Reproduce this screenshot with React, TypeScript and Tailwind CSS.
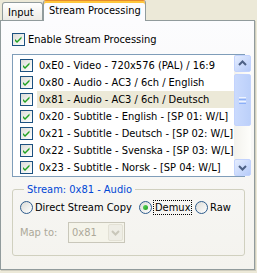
import React from "react";

function XPCheck() {
  return (
    <div className="w-[13px] h-[13px] shrink-0 border border-[#1C5180] bg-gradient-to-br from-[#DCDCD7] to-[#FFFFFF] flex items-center justify-center">
      <svg width="11" height="11" viewBox="0 0 11 11">
        <path d="M2 5 L4 7 L8.5 2.5 L8.5 4.5 L4 9 L2 7 Z" fill="#21A121" />
      </svg>
    </div>
  );
}

function XPRadio({ checked }: { checked?: boolean }) {
  return (
    <div className="w-[13px] h-[13px] shrink-0 rounded-full border border-[#2E5C8C] bg-gradient-to-br from-[#DCDCD7] to-[#FFFFFF] flex items-center justify-center">
      {checked && (
        <div className="w-[5px] h-[5px] rounded-full bg-gradient-to-br from-[#5BD85A] to-[#1E9C1E]" />
      )}
    </div>
  );
}

function ScrollBtn({ up }: { up?: boolean }) {
  return (
    <div className="w-[17px] h-[17px] rounded-[2px] border border-[#C3D3FD] bg-gradient-to-br from-[#E5EDFE] to-[#B6CBF9] flex items-center justify-center">
      <svg width="9" height="7" viewBox="0 0 9 7">
        {up ? (
          <path d="M1 5 L4.5 1.5 L8 5" stroke="#4D6185" strokeWidth="2" fill="none" />
        ) : (
          <path d="M1 2 L4.5 5.5 L8 2" stroke="#4D6185" strokeWidth="2" fill="none" />
        )}
      </svg>
    </div>
  );
}

const rows = [
  "0xE0 - Video - 720x576 (PAL) / 16:9",
  "0x80 - Audio - AC3 / 6ch / English",
  "0x81 - Audio - AC3 / 6ch / Deutsch",
  "0x20 - Subtitle - English - [SP 01: W/L]",
  "0x21 - Subtitle - Deutsch - [SP 02: W/L]",
  "0x22 - Subtitle - Svenska - [SP 03: W/L]",
  "0x23 - Subtitle - Norsk - [SP 04: W/L]",
];

export default function App() {
  return (
    <div className="w-[257px] h-[273px] bg-[#ECE9D8] overflow-hidden font-['DejaVu_Sans_Condensed','DejaVu_Sans',sans-serif] text-[11px] leading-[13px] text-black">
      {/* Tabs */}
      <div className="flex items-end h-[20px] pl-[2px]">
        <div className="w-[41px] h-[18px] rounded-t-[3px] border border-b-0 border-[#919B9C] bg-gradient-to-b from-[#FFFFFF] to-[#ECEBE6] pl-[5px] pt-[3px]">
          Input
        </div>
        <div className="relative z-10 w-[103px] h-[21px] -mb-[1px] rounded-t-[3px] border-t border-t-[#E68B2C] border-x border-x-[#919B9C] bg-[#FCFCFE] shadow-[inset_0_2px_0_#FFC73C] pl-[5px] pt-[3px]">
          Stream Processing
        </div>
      </div>
      {/* Panel */}
      <div className="w-[255px] h-[250px] border border-[#919B9C] bg-gradient-to-b from-[#FCFCFE] to-[#F4F3EE] shadow-[1px_1px_0_#D0CEBF] flex flex-col">
        <div className="flex items-center ml-[11px] mt-[12px] h-[13px]">
          <XPCheck />
          <span className="ml-[3px]">Enable Stream Processing</span>
        </div>
        {/* List */}
        <div className="ml-[11px] mt-[8px] w-[233px] h-[123px] border border-[#7F9DB9] bg-white flex">
          <div className="flex-1 pt-[2px] flex flex-col">
            {rows.map((r, i) => (
              <div key={i} className="h-[17px] flex items-center pl-[7px]">
                <XPCheck />
                <span
                  className={
                    "ml-[4px] flex-1 h-[17px] pl-[2px] flex items-center whitespace-nowrap overflow-hidden " +
                    (i === 2 ? "bg-[#ECE9D8]" : "")
                  }
                >
                  {r}
                </span>
              </div>
            ))}
          </div>
          <div className="w-[17px] h-full bg-gradient-to-r from-[#F3F2ED] to-[#FEFEFB] flex flex-col">
            <ScrollBtn up />
            <div className="flex-1 pt-[2px]">
              <div className="h-[52px] rounded-[2px] border border-[#C3D3FD] bg-gradient-to-r from-[#CADAFD] to-[#BCD0FA] flex flex-col items-center justify-center gap-[1px]">
                <div className="w-[7px] h-[1px] bg-[#EEF4FE]" />
                <div className="w-[7px] h-[1px] bg-[#8CB0F8]" />
                <div className="w-[7px] h-[1px] bg-[#EEF4FE]" />
                <div className="w-[7px] h-[1px] bg-[#8CB0F8]" />
              </div>
            </div>
            <ScrollBtn />
          </div>
        </div>
        {/* Group box */}
        <fieldset className="ml-[11px] mt-[6px] w-[233px] h-[73px] border border-[#D0D0BF] rounded-[3px] pl-[7px] pr-[4px]">
          <legend className="ml-[4px] px-[3px] text-[#0046D5] h-[13px]">Stream: 0x81 - Audio</legend>
          <div className="flex items-center mt-[4px] h-[15px]">
            <div className="w-[119px] flex items-center">
              <XPRadio />
              <span className="ml-[2px]">Direct Stream Copy</span>
            </div>
            <div className="w-[56px] flex items-center">
              <XPRadio checked />
              <span className="ml-[1px] px-[1px] h-[15px] border border-dotted border-black flex items-center">Demux</span>
            </div>
            <div className="flex items-center">
              <XPRadio />
              <span className="ml-[2px]">Raw</span>
            </div>
          </div>
          <div className="flex items-center mt-[7px]">
            <span className="w-[48px] text-[#ACA899]">Map to:</span>
            <div className="w-[57px] h-[21px] border border-[#C9C7BA] bg-[#F5F4EA] flex items-center justify-between pl-[3px] pr-[1px]">
              <span className="text-[#ACA899]">0x81</span>
              <div className="w-[15px] h-[17px] rounded-[2px] bg-[#EEEDE5] border border-[#E3E1D5] flex items-center justify-center">
                <svg width="9" height="7" viewBox="0 0 9 7">
                  <path d="M1 2 L4.5 5.5 L8 2" stroke="#C9C7BA" strokeWidth="2" fill="none" />
                </svg>
              </div>
            </div>
          </div>
        </fieldset>
      </div>
    </div>
  );
}
